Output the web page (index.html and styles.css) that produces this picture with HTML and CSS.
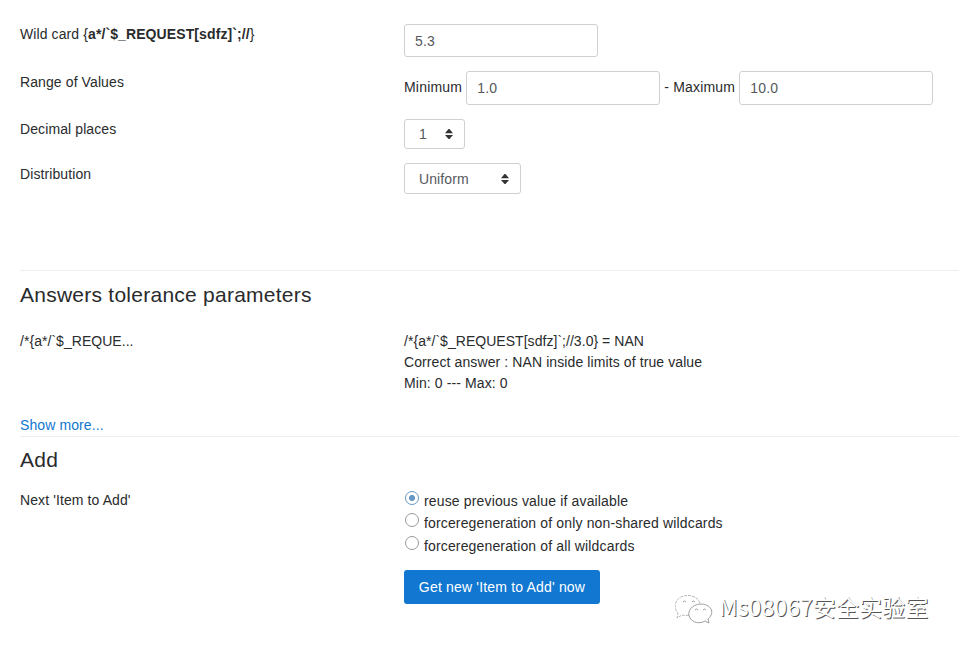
FILE: index.html
```html
<!DOCTYPE html>
<html lang="en">
<head>
<meta charset="utf-8">
<title>Wild card parameters</title>
<link rel="stylesheet" href="styles.css">
</head>
<body>
<form class="form">
  <section class="wildcard">
    <div class="row row-name">
      <div class="label">Wild card {<b>a*/`$_REQUEST[sdfz]`;//</b>}</div>
      <div class="field"><input class="input" type="text" value="5.3"></div>
    </div>
    <div class="row row-range">
      <div class="label">Range of Values</div>
      <div class="field range"><span>Minimum</span><input class="input" type="text" value="1.0"><span>- Maximum</span><input class="input" type="text" value="10.0"></div>
    </div>
    <div class="row row-places">
      <div class="label">Decimal places</div>
      <div class="field"><div class="select select-small"><span>1</span><svg class="caret" viewBox="0 0 8 10"><path d="M0 4.3 3.5 0H4.5L8 4.3ZM0 6H8L4.5 10H3.5Z"/></svg></div></div>
    </div>
    <div class="row row-dist">
      <div class="label">Distribution</div>
      <div class="field"><div class="select select-wide"><span>Uniform</span><svg class="caret" viewBox="0 0 8 10"><path d="M0 4.3 3.5 0H4.5L8 4.3ZM0 6H8L4.5 10H3.5Z"/></svg></div></div>
    </div>
  </section>
  <section class="tolerance">
    <h3>Answers tolerance parameters</h3>
    <div class="row">
      <div class="label formula">/*{a*/`$_REQUE...</div>
      <div class="field"><span class="formula">/*{a*/`$_REQUEST[sdfz]`;//3.0} = NAN</span><br>Correct answer : NAN inside limits of true value<br>Min: 0 --- Max: 0</div>
    </div>
    <a class="more" href="#">Show more...</a>
  </section>
  <section class="add">
    <h3>Add</h3>
    <div class="row">
      <div class="label">Next 'Item to Add'</div>
      <div class="field options">
        <label class="option"><span class="radio checked"></span>reuse previous value if available</label>
        <label class="option"><span class="radio"></span>forceregeneration of only non-shared wildcards</label>
        <label class="option"><span class="radio"></span>forceregeneration of all wildcards</label>
        <button class="button" type="button">Get new 'Item to Add' now</button>
      </div>
    </div>
  </section>
</form>
<div class="watermark">
  <svg class="wechat" viewBox="0 0 38 30">
    <path d="M14 20Q10 21 7 20L2 23 3 18C-2 13 0 5 6 2 14-2 24 2 25 9"/>
    <path class="front" d="M26 9C17 9 11 17 15 23 18 28 25 29 30 26L34 28 33 24C41 17 35 9 26 9Z"/>
    <path class="front" d="M8 7q1-2 3 0M17 7q1-2 3 0M20 15q1-2 3 0M28 15q1-2 3 0"/>
  </svg>
  <span>Ms08067安全实验室</span>
</div>
</body>
</html>
```
FILE: styles.css
```css
* { box-sizing: border-box; }

body {
  margin: 0;
  height: 650px;
  overflow: hidden;
  background: #fff;
  color: #292b2c;
  font: 14px/21px "Liberation Sans", Arial, sans-serif;
  letter-spacing: 0.1px;
}

.form { padding: 24px 0 0 20px; }
.wildcard { height: 246px; }
.row { display: grid; grid-template-columns: 384px 1fr; }
.row-name { height: 47px; }
.row-range { height: 48px; }
.row-places { height: 44px; }
.row-range .label, .row-dist .label { padding-top: 1px; }
.formula { letter-spacing: 0.04px; }

.input {
  display: block;
  width: 194px;
  height: 33px;
  padding: 1px 10px 0;
  border: 1px solid #d0d0d0;
  border-radius: 3px;
  background: #fff;
  color: #55595c;
  font: inherit;
  letter-spacing: 0.2px;
}

.range { display: flex; align-items: flex-start; gap: 4px; line-height: 33px; letter-spacing: 0.2px; white-space: nowrap; }
.range .input { height: 34px; padding: 0 10px 1px; }

.select {
  display: flex;
  align-items: center;
  justify-content: space-between;
  height: 30px;
  padding: 0 11px 0 14px;
  border: 1px solid #d0d0d0;
  border-radius: 3px;
  color: #55595c;
}
.select-small { width: 61px; }
.select-wide { width: 117px; height: 31px; }
.select-wide span { padding-top: 1px; }
.caret { width: 8px; height: 10px; fill: #333; }

.tolerance { height: 166px; border-top: 1px solid #eee; }
.add { border-top: 1px solid #eee; }

h3 { margin: 0; font-size: 21px; line-height: 24px; font-weight: 400; letter-spacing: 0.25px; }
.tolerance h3 { padding-top: 12px; margin-bottom: 24px; }
.add h3 { padding-top: 11px; margin-bottom: 18px; }

.more { display: block; margin-top: 21px; color: #1177d1; text-decoration: none; }

.options { letter-spacing: 0.15px; }
.option { display: flex; height: 22px; line-height: 23px; }
.option:nth-child(2) { height: 23px; }
.radio {
  width: 14px;
  height: 14px;
  margin: 1px 5px 0 1px;
  border: 1.4px solid #999;
  border-radius: 50%;
}
.checked { border-color: #6797c5; background: radial-gradient(circle, #6797c5 2.7px, #fff 3.3px); }

.button {
  display: block;
  width: 196px;
  height: 34px;
  margin-top: 13px;
  padding: 1px 0 0;
  border: 0;
  border-radius: 3px;
  background: #1177d1;
  color: #fff;
  font: inherit;
  letter-spacing: 0.18px;
}

.watermark {
  position: absolute;
  left: 675px;
  top: 590px;
  display: flex;
  gap: 6px;
  color: #fff;
  font: 23px/33px "Noto Sans CJK SC", sans-serif;
  letter-spacing: 0.08px;
  text-shadow: 1px 1px 0.5px #555;
  white-space: nowrap;
}
.wechat { width: 38px; height: 30px; margin-top: 5px; fill: none; stroke: #999; stroke-width: 0.7; stroke-dasharray: 3 1; }
.front { stroke: #777; stroke-dasharray: none; }
```
